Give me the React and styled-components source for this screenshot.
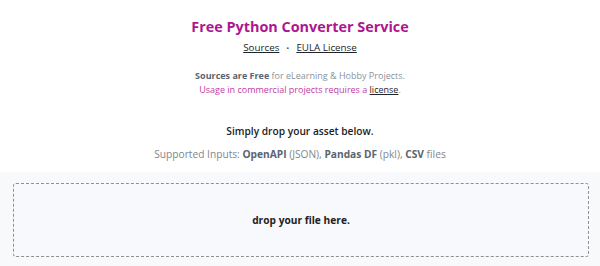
import React from "react";
import styled, { createGlobalStyle } from "styled-components";

const GlobalStyle = createGlobalStyle`
  html, body {
    margin: 0;
    padding: 0;
    background: #ffffff;
    font-family: "Open Sans", "Noto Sans", sans-serif;
  }
`;

const Page = styled.div`
  width: 600px;
  height: 266px;
  display: flex;
  flex-direction: column;
  overflow: hidden;
`;

const Header = styled.div`
  display: flex;
  flex-direction: column;
  align-items: center;
  padding-top: 17px;
  height: 172px;
  box-sizing: border-box;
`;

const Title = styled.h1`
  margin: 0;
  font-size: 14.4px;
  font-weight: 700;
  color: #ad168f;
  line-height: 20px;
`;

const Links = styled.div`
  display: flex;
  align-items: center;
  gap: 7px;
  margin-top: 4px;
  font-size: 9.8px;
  line-height: 14px;
  color: #212529;
`;

const Link = styled.a`
  color: #212529;
  text-decoration: underline;
`;

const Dot = styled.span`
  font-size: 8px;
  color: #555;
`;

const Note = styled.p`
  margin: 14px 0 0;
  font-size: 9px;
  line-height: 14px;
  text-align: center;
  color: #8a929a;
`;

const Strong = styled.b`
  font-weight: 700;
  color: #5b6470;
`;

const Pink = styled.span`
  color: #c23d9f;
`;

const Lead = styled.p`
  margin: 27px 0 0;
  font-size: 10.2px;
  line-height: 14px;
  font-weight: 600;
  color: #222;
`;

const Inputs = styled.p`
  margin: 9px 0 0;
  font-size: 10.2px;
  line-height: 14px;
  color: #7f868e;
`;

const DropSection = styled.div`
  flex: 1;
  background: #f8f9fb;
  padding: 11px 11px 9px 13px;
  display: flex;
`;

const DropZone = styled.div`
  flex: 1;
  border: 1px dashed #8f8f95;
  border-radius: 3px;
  background: #f7f9fd;
  display: flex;
  align-items: center;
  justify-content: center;
  font-size: 10.2px;
  font-weight: 700;
  color: #222;
`;

export default function App() {
  return (
    <Page>
      <GlobalStyle />
      <Header>
        <Title>Free Python Converter Service</Title>
        <Links>
          <Link>Sources</Link>
          <Dot>•</Dot>
          <Link>EULA License</Link>
        </Links>
        <Note>
          <Strong>Sources are Free</Strong> for eLearning &amp; Hobby Projects.
          <br />
          <Pink>Usage in commercial projects requires a </Pink>
          <Link>license</Link>.
        </Note>
        <Lead>Simply drop your asset below.</Lead>
        <Inputs>
          Supported Inputs: <Strong>OpenAPI</Strong> (JSON),{" "}
          <Strong>Pandas DF</Strong> (pkl), <Strong>CSV</Strong> files
        </Inputs>
      </Header>
      <DropSection>
        <DropZone>drop your file here.</DropZone>
      </DropSection>
    </Page>
  );
}
